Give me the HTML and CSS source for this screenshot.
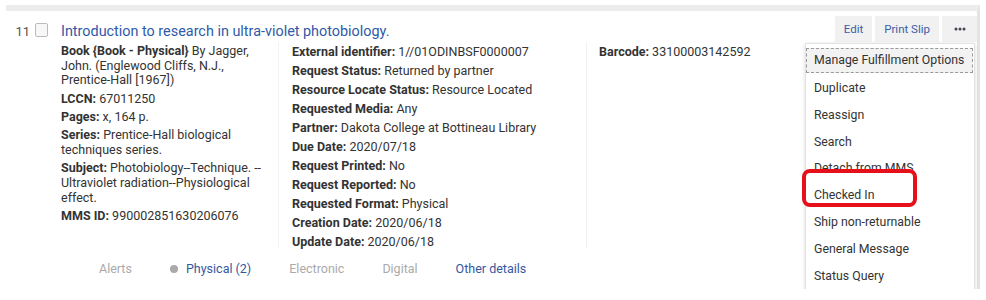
FILE: index.html
```html
<!DOCTYPE html>
<html lang="en">
  <head>
    <meta charset="UTF-8" />
    <title>Resource Sharing Request</title>
    <link rel="stylesheet" href="styles.css">
  </head>
  <body>
    <main class="pagina">
      <section class="registro">
        <header class="cabecera">
          <span class="numero">11</span>
          <span class="casilla"></span>
          <a class="titulo" href="#">Introduction to research in ultra-violet photobiology.</a>
          <div class="acciones">
            <button class="boton">Edit</button>
            <button class="boton">Print Slip</button>
            <button class="boton mas" aria-label="More">
              <svg width="12" height="4" viewBox="0 0 12 4">
                <circle cx="2" cy="2" r="1.5" fill="#445" />
                <circle cx="6" cy="2" r="1.5" fill="#445" />
                <circle cx="10" cy="2" r="1.5" fill="#445" />
              </svg>
            </button>
          </div>
        </header>

        <div class="columnas">
          <div class="col uno">
            <p><b>Book {Book - Physical}</b> By Jagger, John. (Englewood Cliffs, N.J., Prentice-Hall [1967])</p>
            <p><b>LCCN:</b> 67011250</p>
            <p><b>Pages:</b> x, 164 p.</p>
            <p><b>Series:</b> Prentice-Hall biological techniques series.</p>
            <p><b>Subject:</b> Photobiology--Technique. -- Ultraviolet radiation--Physiological effect.</p>
            <p><b>MMS ID:</b> 990002851630206076</p>
          </div>
          <div class="col dos">
            <p><b>External identifier:</b> 1//01ODINBSF0000007</p>
            <p><b>Request Status:</b> Returned by partner</p>
            <p><b>Resource Locate Status:</b> Resource Located</p>
            <p><b>Requested Media:</b> Any</p>
            <p><b>Partner:</b> Dakota College at Bottineau Library</p>
            <p><b>Due Date:</b> 2020/07/18</p>
            <p><b>Request Printed:</b> No</p>
            <p><b>Request Reported:</b> No</p>
            <p><b>Requested Format:</b> Physical</p>
            <p><b>Creation Date:</b> 2020/06/18</p>
            <p><b>Update Date:</b> 2020/06/18</p>
          </div>
          <div class="col tres">
            <p><b>Barcode:</b> 33100003142592</p>
          </div>
        </div>

        <nav class="pestanas">
          <span class="off">Alerts</span>
          <span class="on"><i class="punto"></i>Physical (2)</span>
          <span class="off">Electronic</span>
          <span class="off">Digital</span>
          <span class="on">Other details</span>
        </nav>

        <!-- Menú desplegable del botón de tres puntos -->
        <ul class="menu">
          <li class="foco">Manage Fulfillment Options</li>
          <li>Duplicate</li>
          <li>Reassign</li>
          <li>Search</li>
          <li>Detach from MMS</li>
          <li>Checked In</li>
          <li>Ship non-returnable</li>
          <li>General Message</li>
          <li>Status Query</li>
        </ul>
        <div class="marca"></div>
      </section>
    </main>
  </body>
</html>
```

FILE: styles.css
```css
/* Tarjeta de una petición: cabecera, tres columnas y pestañas abajo */
body {
  margin: 0;
  background: white;
  font-family: Roboto, "Liberation Sans", sans-serif;
  color: #333;
}
.pagina {
  padding: 5px 6px 0 6px;
}
.registro {
  position: relative; /* para el menú y la marca roja */
  border-top: 6px solid #ececec;
  border-right: 3px solid #e3e3e3;
  height: 284px;
  box-sizing: border-box;
}

.cabecera {
  display: flex;
  align-items: center;
  padding-top: 5px;
  height: 26px;
  box-sizing: content-box;
}
.numero {
  font-size: 13px;
  color: #555;
  width: 24px;
  text-align: right;
  margin-top: 4px;
}
.casilla {
  width: 11px;
  height: 12px;
  border: 1px solid #bbb;
  border-radius: 2px;
  background: #f7f7f7;
  margin: 1px 0 0 5px;
}
.titulo {
  margin: 5px 0 0 13px;
  font-size: 14.4px;
  color: #2f5aa8;
  text-decoration: none;
}
.acciones {
  margin-left: auto;
  display: flex;
  gap: 3px;
  align-self: flex-start;
}
.boton {
  font-family: inherit;
  font-size: 11.5px;
  color: #3a5ea6;
  background: #f1f1f1;
  border: none;
  height: 26px;
  padding: 0 9px;
}
.boton.mas {
  width: 35px;
  display: flex;
  align-items: center;
  justify-content: center;
  padding: 0;
}

.columnas {
  display: flex;
  margin: 0 0 0 55px;
  height: 206px;
}
.col p {
  margin: 0;
  font-size: 12.5px;
}
.col b {
  font-weight: 700;
  color: #333;
}
.uno {
  width: 205px;
  padding-right: 12px;
  border-right: 1px solid #f2f2f2;
  line-height: 14.7px;
  padding-top: 2px;
}
.uno p {
  margin-bottom: 3.6px;
}
.dos {
  width: 294px;
  padding-left: 13px;
  border-right: 1px solid #f2f2f2;
  line-height: 19px;
}
.tres {
  padding-left: 12px;
  line-height: 19px;
}

.pestanas {
  display: flex;
  gap: 38px;
  margin: 13px 0 0 93px;
  font-size: 12.5px;
}
.pestanas .off {
  color: #aaa;
}
.pestanas .on {
  color: #34589f;
  display: flex;
  align-items: center;
}
.punto {
  width: 8px;
  height: 8px;
  border-radius: 50%;
  background: #aaa;
  margin-right: 8px;
}

.menu {
  position: absolute;
  left: 799px;
  top: 32px;
  width: 168px;
  margin: 0;
  padding: 4px 0 0 0;
  list-style: none;
  background: white;
  border: 1px solid #e2e2e2;
  box-shadow: 0 1px 4px rgba(0, 0, 0, 0.15);
  height: 260px;
  overflow: hidden;
}
.menu li {
  font-size: 12.3px;
  color: #333;
  height: 26.8px;
  line-height: 26.8px;
  padding-left: 8px;
  white-space: nowrap;
}
.menu li.foco {
  background: #f2f2f2;
  border: 1px dashed #999;
  height: 23px;
  line-height: 23px;
  margin: 0 1px 2px 0;
  padding-left: 7px;
}
.marca {
  position: absolute;
  left: 796px;
  top: 158px;
  width: 107px;
  height: 30px;
  border: 4px solid #e5101a;
  border-radius: 8px;
}
```
